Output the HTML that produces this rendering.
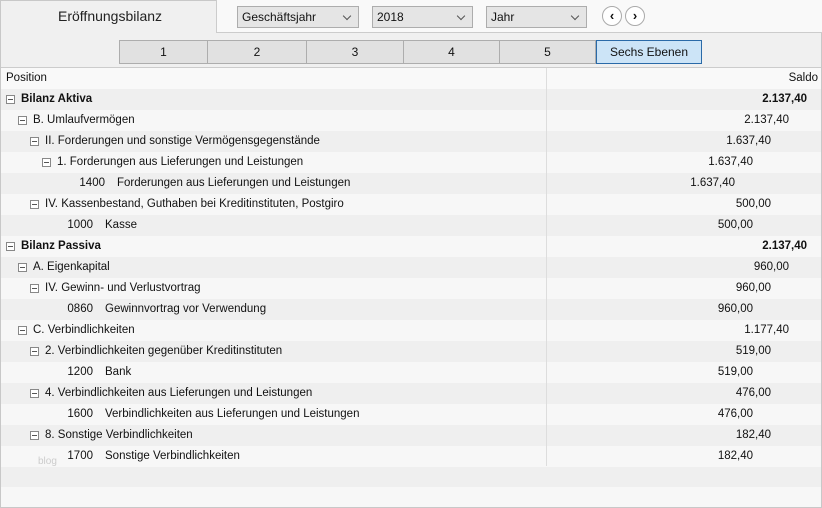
<!DOCTYPE html><html><head><meta charset="utf-8"><style>
*{margin:0;padding:0;box-sizing:border-box}
body{width:822px;height:508px;background:#f0f0f0;font-family:"Liberation Sans",sans-serif;font-size:11.5px;color:#111;position:relative;overflow:hidden}
.a{position:absolute;white-space:nowrap}
.sel{position:absolute;top:6px;height:22px;border:1px solid #adadad;background:#e5e5e5;font-size:12px;padding:3px 4px}
.sel:after{content:"";position:absolute;right:8px;top:6px;width:5px;height:5px;border-right:1px solid #555;border-bottom:1px solid #555;transform:rotate(45deg)}
.btn{position:absolute;top:40px;height:24px;border:1px solid #adadad;background:#e1e1e1;font-size:12px;text-align:center;line-height:22px}
.row{position:absolute;left:1px;width:820px;height:21px;line-height:21px}
.ic{position:absolute;top:6px;width:9px;height:9px;border:1px solid #888;background:#fff}
.ic:after{content:"";position:absolute;left:1px;top:3px;width:5px;height:1px;background:#555}
.v{position:absolute;text-align:right}
</style></head><body>
<div class="a" style="left:0;top:0;width:822px;height:508px;border:1px solid #c8c8c8"></div>
<div class="a" style="left:58px;top:8px;font-size:14px;color:#222">Eröffnungsbilanz</div>
<div class="a" style="left:216px;top:0;width:606px;height:33px;background:#f9f9f9;border-left:1px solid #ccc;border-bottom:1px solid #ccc"></div>
<div class="sel" style="left:237px;width:122px">Geschäftsjahr</div>
<div class="sel" style="left:372px;width:101px">2018</div>
<div class="sel" style="left:486px;width:101px">Jahr</div>
<div class="a" style="left:602px;top:6px;width:20px;height:20px;border:1px solid #aaa;border-radius:50%;background:#fff;font-size:13px;font-weight:bold;text-align:center;line-height:18px">‹</div>
<div class="a" style="left:625px;top:6px;width:20px;height:20px;border:1px solid #aaa;border-radius:50%;background:#fff;font-size:13px;font-weight:bold;text-align:center;line-height:18px">›</div>
<div class="btn" style="left:119px;width:89px">1</div>
<div class="btn" style="left:207px;width:100px">2</div>
<div class="btn" style="left:306px;width:98px">3</div>
<div class="btn" style="left:403px;width:97px">4</div>
<div class="btn" style="left:499px;width:97px">5</div>
<div class="btn" style="left:596px;width:106px;background:#cce4f7;border-color:#2a6aa8">Sechs Ebenen</div>
<div class="a" style="left:1px;top:67px;width:820px;height:1px;background:#ccc"></div>
<div class="row" style="top:68px;background:#f9f9f9"><span class="a" style="left:5px">Position</span><span class="a" style="right:3px">Saldo</span></div>
<div id="rows"></div>
<div class="row" style="top:467px;height:20px;background:#efefef"></div>
<div class="row" style="top:487px;height:20px;background:#f7f7f7"></div>
<div class="a" style="left:546px;top:68px;width:1px;height:398px;background:#ddd"></div>
<div class="a" style="left:38px;top:456px;color:#ccc;font-size:10px">blog</div>
<script>
var R=[[0,'n','Bilanz Aktiva','2.137,40',1],[1,'n','B. Umlaufvermögen','2.137,40'],[2,'n','II. Forderungen und sonstige Vermögensgegenstände','1.637,40'],[3,'n','1. Forderungen aus Lieferungen und Leistungen','1.637,40'],[4,'l','1400|Forderungen aus Lieferungen und Leistungen','1.637,40'],[2,'n','IV. Kassenbestand, Guthaben bei Kreditinstituten, Postgiro','500,00'],[3,'l','1000|Kasse','500,00'],[0,'n','Bilanz Passiva','2.137,40',1],[1,'n','A. Eigenkapital','960,00'],[2,'n','IV. Gewinn- und Verlustvortrag','960,00'],[3,'l','0860|Gewinnvortrag vor Verwendung','960,00'],[1,'n','C. Verbindlichkeiten','1.177,40'],[2,'n','2. Verbindlichkeiten gegenüber Kreditinstituten','519,00'],[3,'l','1200|Bank','519,00'],[2,'n','4. Verbindlichkeiten aus Lieferungen und Leistungen','476,00'],[3,'l','1600|Verbindlichkeiten aus Lieferungen und Leistungen','476,00'],[2,'n','8. Sonstige Verbindlichkeiten','182,40'],[3,'l','1700|Sonstige Verbindlichkeiten','182,40']];
var h='';R.forEach(function(r,i){var d=r[0],y=89+21*i,bg=i%2?'#f7f7f7':'#efefef',fw=r[4]?'font-weight:bold;':'';
h+='<div class="row" style="top:'+y+'px;background:'+bg+';'+fw+'">';
if(r[1]=='n'){var x=5+12*d;h+='<div class="ic" style="left:'+x+'px"></div><span class="a" style="left:'+(x+15)+'px">'+r[2]+'</span>';}
else{var p=r[2].split('|');var nx=d==4?116:104;h+='<span class="a" style="right:'+(820-(nx-12))+'px">'+p[0]+'</span><span class="a" style="left:'+nx+'px">'+p[1]+'</span>';}
h+='<span class="v" style="right:'+(14+18*d)+'px">'+r[3]+'</span></div>';});
document.getElementById('rows').innerHTML=h;
</script>
</body></html>
